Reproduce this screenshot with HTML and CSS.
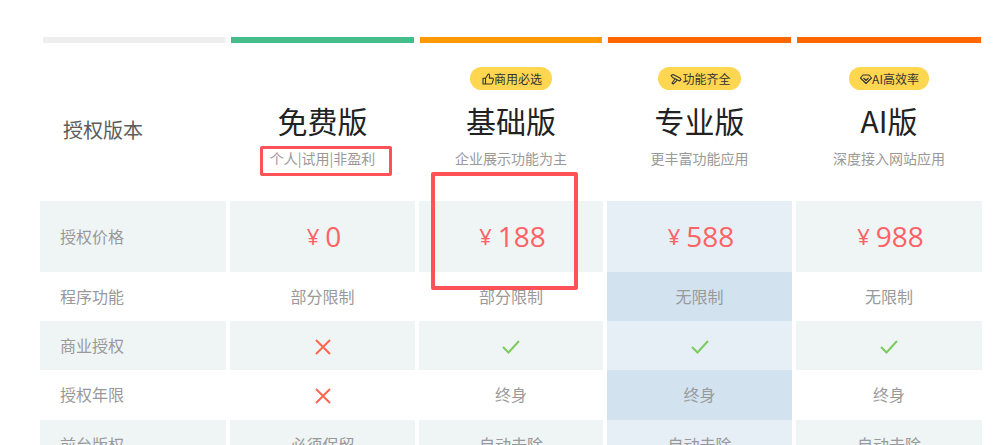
FILE: index.html
```html
<!DOCTYPE html>
<html lang="zh-CN">
<head>
<meta charset="utf-8">
<title>授权版本</title>
<link rel="stylesheet" href="styles.css">
</head>
<body>
<div class="note note-sub"></div>
<div class="note note-price"></div>
<main class="pricing">
  <div class="row row-bars">
    <div class="bar bar-grey"></div>
    <div class="bar bar-green"></div>
    <div class="bar bar-amber"></div>
    <div class="bar bar-orange"></div>
    <div class="bar bar-orange"></div>
  </div>
  <div class="row row-head">
    <div class="head-label">授权版本</div>
    <div class="plan">
      <div class="badge-slot"></div>
      <h2 class="plan-name">免费版</h2>
      <p class="plan-sub">个人|试用|非盈利</p>
    </div>
    <div class="plan">
      <div class="badge-slot"><span class="badge">
        <svg class="badge-icon" viewBox="0 0 12 12"><path d="M3.5 5.2H1v5.8h2.5M3.5 11h5.6c.6 0 1-.4 1.2-.9l1.1-3.7c.2-.7-.3-1.3-1-1.3H7.300l.3-2.200C7.700 2 7.200 1 6.300 1L3.500 5.200z"/></svg>商用必选</span></div>
      <h2 class="plan-name">基础版</h2>
      <p class="plan-sub">企业展示功能为主</p>
    </div>
    <div class="plan">
      <div class="badge-slot"><span class="badge">
        <svg class="badge-icon" viewBox="0 0 12 12"><path d="M1 2.500l2-1 7 3.500 1 1.500-1.500 1.500-1-.5L2.500 4.500 1 2.500zM5 6L2 10l1.200 1L7 7.300"/></svg>功能齐全</span></div>
      <h2 class="plan-name">专业版</h2>
      <p class="plan-sub">更丰富功能应用</p>
    </div>
    <div class="plan">
      <div class="badge-slot"><span class="badge badge-tight">
        <svg class="badge-icon" viewBox="0 0 12 12"><path d="M3 2h6l2.500 3L6 10.500.5 5 3 2zM3.500 5L6 7.500 8.500 5"/></svg>AI高效率</span></div>
      <h2 class="plan-name">AI版</h2>
      <p class="plan-sub">深度接入网站应用</p>
    </div>
  </div>
  <div class="row row-price tint">
    <div class="label">授权价格</div>
    <div class="cell price"><span class="yen">¥</span>0</div>
    <div class="cell price"><span class="yen">¥</span>188</div>
    <div class="cell price hl"><span class="yen">¥</span>588</div>
    <div class="cell price"><span class="yen">¥</span>988</div>
  </div>
  <div class="row row-a">
    <div class="label">程序功能</div>
    <div class="cell">部分限制</div>
    <div class="cell">部分限制</div>
    <div class="cell hl">无限制</div>
    <div class="cell">无限制</div>
  </div>
  <div class="row row-b tint">
    <div class="label">商业授权</div>
    <div class="cell"><svg class="mark no" viewBox="0 0 16 16"><path d="M1 1l14 14M15 1L1 15"/></svg></div>
    <div class="cell"><svg class="mark yes" viewBox="0 0 18 14"><path d="M1 7l5.500 5.500L17 1"/></svg></div>
    <div class="cell hl"><svg class="mark yes" viewBox="0 0 18 14"><path d="M1 7l5.500 5.500L17 1"/></svg></div>
    <div class="cell"><svg class="mark yes" viewBox="0 0 18 14"><path d="M1 7l5.500 5.500L17 1"/></svg></div>
  </div>
  <div class="row row-c">
    <div class="label">授权年限</div>
    <div class="cell"><svg class="mark no" viewBox="0 0 16 16"><path d="M1 1l14 14M15 1L1 15"/></svg></div>
    <div class="cell">终身</div>
    <div class="cell hl">终身</div>
    <div class="cell">终身</div>
  </div>
  <div class="row row-d tint">
    <div class="label">前台版权</div>
    <div class="cell">必须保留</div>
    <div class="cell">自动去除</div>
    <div class="cell hl">自动去除</div>
    <div class="cell">自动去除</div>
  </div>
</main>
</body>
</html>
```

FILE: styles.css
```css
html, body {
  margin: 0;
  height: 445px;
  overflow: hidden;
  background: #fff;
}

body {
  position: relative;
  font-family: "Noto Sans CJK SC", "Open Sans", sans-serif;
  color: #999;
}

.pricing {
  padding: 37px 0 0 40px;
  width: 942px;
}

.row {
  display: grid;
  grid-template-columns: 186px 185px 184px 185px 186px;
  column-gap: 4px;
}

.row-bars { height: 6px; }
.row-head { height: 158px; }
.row-price { height: 71px; }
.row-a { height: 49px; }
.row-b { height: 49px; }
.row-c { height: 50px; }
.row-d { height: 50px; }

.bar { margin: 0 1px; }
.bar-grey { background: #eeeeee; margin-left: 3px; }
.bar-green { background: #45bd8a; }
.bar-amber { background: #ff9900; }
.bar-orange { background: #ff6600; }

.head-label {
  display: flex;
  align-items: center;
  padding: 14px 0 0 23px;
  font-size: 20px;
  color: #5c5c5c;
}

.plan {
  display: flex;
  flex-direction: column;
  align-items: center;
  padding-top: 24px;
}

.badge-slot { height: 23px; }

.badge {
  display: flex;
  align-items: center;
  height: 23px;
  padding: 0 10px 0 12px;
  border-radius: 12px;
  background: #ffd650;
  color: #333;
  font-size: 12px;
  line-height: 23px;
  white-space: nowrap;
}

.badge-tight { padding: 0 10px 0 11px; }

.badge-icon {
  width: 12px;
  height: 12px;
  flex: none;
  fill: none;
  stroke: #333;
  stroke-width: 1.100;
  stroke-linejoin: round;
}

.plan-name {
  margin: 8px 0 0;
  font-size: 30px;
  font-weight: 400;
  line-height: 44px;
  color: #222;
}

.plan-sub {
  margin: 6px 0 0;
  font-size: 14px;
  line-height: 20px;
  color: #999;
}

.label {
  display: flex;
  align-items: center;
  padding: 0 0 2px 20px;
  font-size: 16px;
}

.cell {
  display: flex;
  align-items: center;
  justify-content: center;
  padding-bottom: 2px;
  font-size: 16px;
}

.tint .label, .tint .cell { background: #eff4f5; }
.row .cell.hl { background: #d3e2ef; }
.tint .cell.hl { background: #e6eff6; }

.price {
  padding-left: 3px;
  font-family: "Open Sans", "Noto Sans CJK SC", sans-serif;
  font-size: 28px;
  color: #ff6265;
}

.yen {
  margin-right: 6px;
  font-size: 22px;
}

.mark {
  display: block;
  margin-top: 4px;
  fill: none;
  stroke-width: 2;
}
.mark.no { width: 16px; height: 16px; stroke: #ff6650; }
.mark.yes { width: 18px; height: 14px; stroke: #7ccb5e; }

.note {
  position: absolute;
  box-sizing: border-box;
  border: 3px solid #ff5158;
  border-radius: 2px;
}
.note-sub { left: 260px; top: 146px; width: 132px; height: 30px; }
.note-price { left: 431px; top: 172px; width: 147px; height: 118px; border-width: 4px; }
```
